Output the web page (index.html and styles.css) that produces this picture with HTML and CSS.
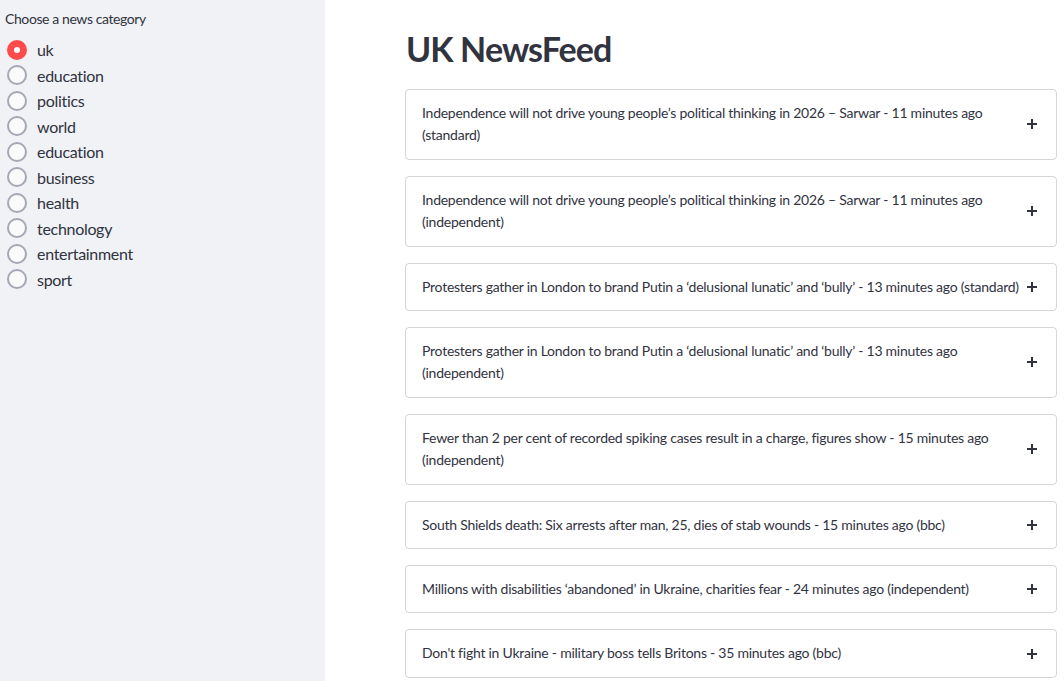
FILE: index.html
```html
<!DOCTYPE html>
<html>
<head>
<meta charset="utf-8">
<link rel="stylesheet" href="styles.css">
</head>
<body>
<div class="app">
  <aside class="sidebar">
    <div class="label">Choose a news category</div>
    <div class="radios">
      <label class="radio checked"><span class="dot"></span><span>uk</span></label>
      <label class="radio"><span class="dot"></span><span>education</span></label>
      <label class="radio"><span class="dot"></span><span>politics</span></label>
      <label class="radio"><span class="dot"></span><span>world</span></label>
      <label class="radio"><span class="dot"></span><span>education</span></label>
      <label class="radio"><span class="dot"></span><span>business</span></label>
      <label class="radio"><span class="dot"></span><span>health</span></label>
      <label class="radio"><span class="dot"></span><span>technology</span></label>
      <label class="radio"><span class="dot"></span><span>entertainment</span></label>
      <label class="radio"><span class="dot"></span><span>sport</span></label>
    </div>
  </aside>
  <main class="main">
    <h1 class="title">UK NewsFeed</h1>
    <div class="list">
      <div class="exp"><span class="txt">Independence will not drive young people’s political thinking in 2026 – Sarwar - 11 minutes ago (standard)</span><span class="plus"></span></div>
      <div class="exp"><span class="txt">Independence will not drive young people’s political thinking in 2026 – Sarwar - 11 minutes ago (independent)</span><span class="plus"></span></div>
      <div class="exp"><span class="txt">Protesters gather in London to brand Putin a ‘delusional lunatic’ and ‘bully’ - 13 minutes ago (standard)</span><span class="plus"></span></div>
      <div class="exp"><span class="txt">Protesters gather in London to brand Putin a ‘delusional lunatic’ and ‘bully’ - 13 minutes ago (independent)</span><span class="plus"></span></div>
      <div class="exp"><span class="txt">Fewer than 2 per cent of recorded spiking cases result in a charge, figures show - 15 minutes ago (independent)</span><span class="plus"></span></div>
      <div class="exp"><span class="txt">South Shields death: Six arrests after man, 25, dies of stab wounds - 15 minutes ago (bbc)</span><span class="plus"></span></div>
      <div class="exp"><span class="txt">Millions with disabilities ‘abandoned’ in Ukraine, charities fear - 24 minutes ago (independent)</span><span class="plus"></span></div>
      <div class="exp"><span class="txt">Don't fight in Ukraine - military boss tells Britons - 35 minutes ago (bbc)</span><span class="plus"></span></div>
    </div>
  </main>
</div>
</body>
</html>
```
FILE: styles.css
```css
* { box-sizing: border-box; }
html, body { margin: 0; padding: 0; height: 100%; overflow: hidden; }
body {
  font-family: Lato, "Open Sans", sans-serif;
  color: #31333f;
  background: #fff;
}
.app { display: flex; height: 681px; }
.sidebar {
  width: 325px;
  flex: none;
  background: #f0f2f6;
  padding: 10px 0 0 5px;
}
.label { font-size: 14px; line-height: 18px; margin-bottom: 9px; letter-spacing: -0.4px; }
.radios { display: flex; flex-direction: column; }
.radio {
  display: flex;
  align-items: center;
  height: 25.5px;
  font-size: 16px;
  gap: 10px;
  padding-left: 2px;
  letter-spacing: -0.3px;
}
.dot {
  width: 20px; height: 20px;
  border-radius: 50%;
  border: 2px solid #a3a8b4;
  background: #fafafa;
  flex: none;
  position: relative;
}
.radio.checked .dot { background: #ff4b4b; border-color: #ff4b4b; }
.radio.checked .dot::after {
  content: ""; position: absolute;
  left: 50%; top: 50%; width: 6px; height: 6px;
  margin: -3px 0 0 -3px; border-radius: 50%; background: #fff;
}
.main { flex: 1; padding: 28px 7px 0 80px; }
.title {
  font-size: 34px; font-weight: 700; margin: 0 0 19px 1px; line-height: 42px;
  letter-spacing: -0.9px;
}
.list { display: flex; flex-direction: column; gap: 16px; }
.exp {
  border: 1px solid rgba(49,51,63,0.2);
  border-radius: 4px;
  display: flex;
  align-items: center;
  padding: 12px 16px;
  font-size: 14px;
  line-height: 22.4px;
  letter-spacing: -0.25px;
}
.txt { flex: 1; padding-right: 4px; }
.plus { width: 10px; height: 10px; position: relative; flex: none; margin-right: 3px; }
.plus::before, .plus::after {
  content: ""; position: absolute; background: #31333f;
}
.plus::before { left: 0; top: 4px; width: 10px; height: 2px; }
.plus::after { left: 4px; top: 0; width: 2px; height: 10px; }
```
